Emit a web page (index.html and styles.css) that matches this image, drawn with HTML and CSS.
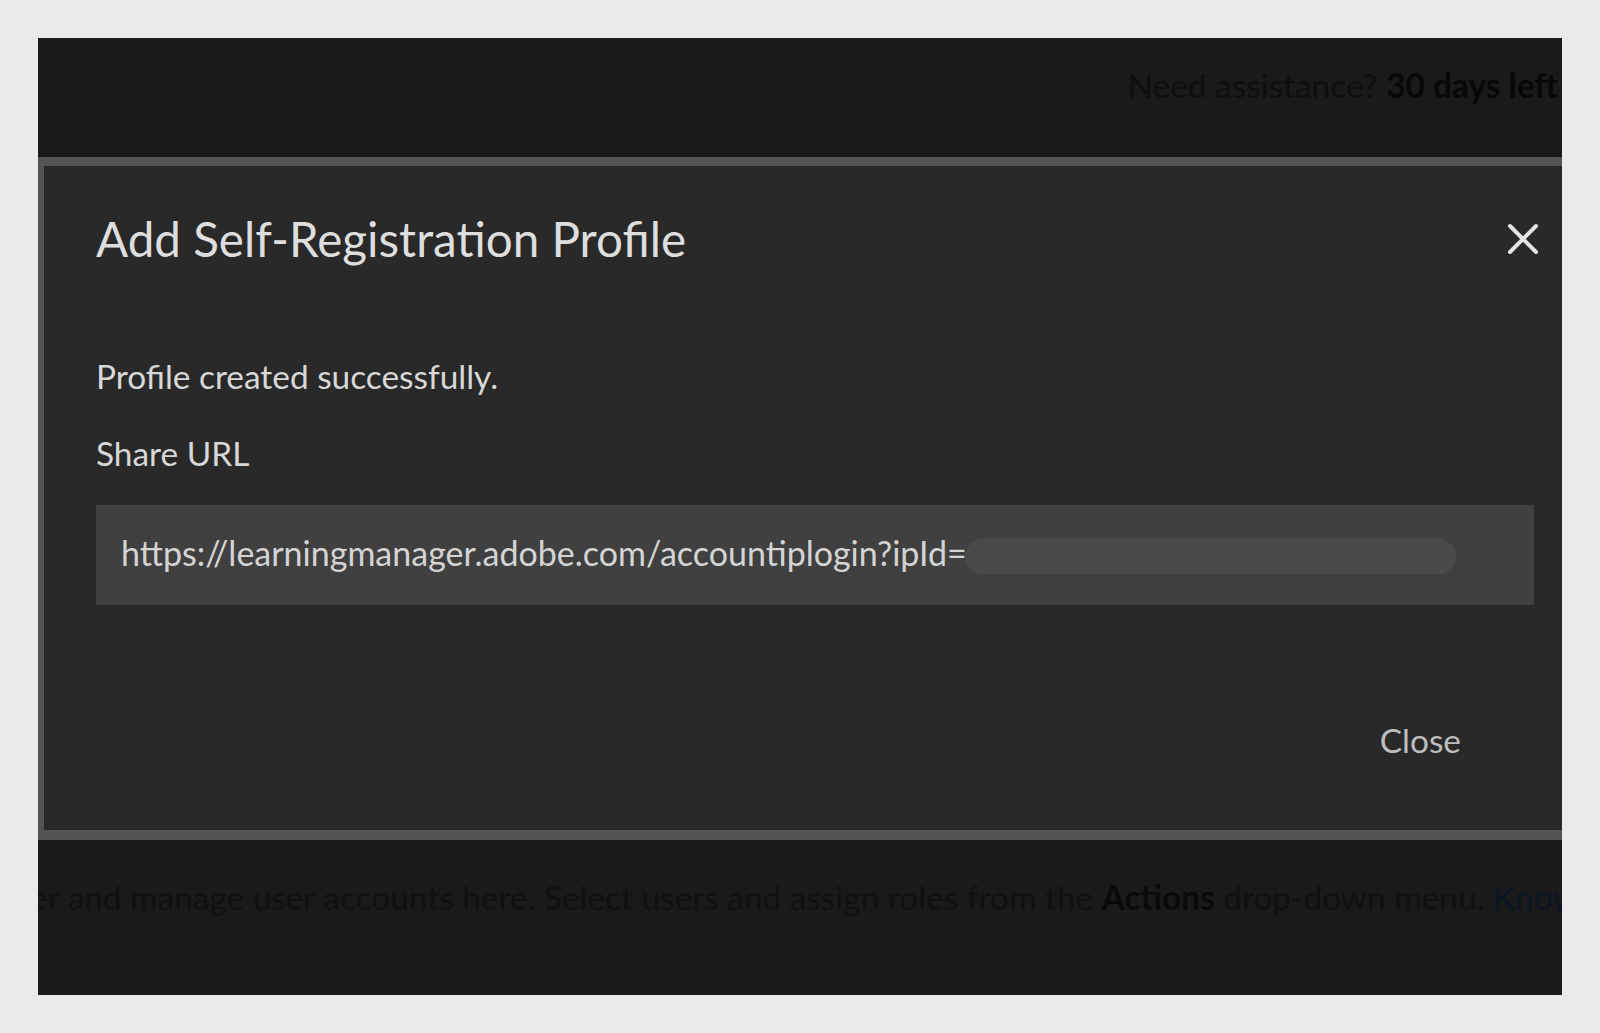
FILE: index.html
```html
<!DOCTYPE html>
<html lang="en">
<head>
<meta charset="utf-8">
<title>Add Self-Registration Profile</title>
<link rel="stylesheet" href="styles.css">
</head>
<body>
<div class="app">
  <header class="topbar">
    <div class="help"><span class="need">Need assistance?</span> <strong class="days">30 days left</strong></div>
  </header>
  <section class="modal" role="dialog" aria-labelledby="dlg-title">
    <div class="modal-head">
      <h1 id="dlg-title" class="modal-title">Add Self-Registration Profile</h1>
      <button class="icon-close" aria-label="Close dialog">
        <svg viewBox="0 0 32 32" width="32" height="32"><path d="M3 3 L29 29 M29 3 L3 29" stroke="currentColor" stroke-width="4" stroke-linecap="round"/></svg>
      </button>
    </div>
    <div class="modal-body">
      <p class="msg">Profile created successfully.</p>
      <p class="label">Share URL</p>
      <div class="url-box"><span class="url">https://learningmanager.adobe.com/accountiplogin?ipId=</span><span class="redact"></span></div>
    </div>
    <div class="modal-foot"><button class="btn-close">Close</button></div>
  </section>
  <footer class="intro">
    <p class="intro-text">er and manage user accounts here. Select users and assign roles from the <strong>Actions</strong> drop-down menu. <a class="know" href="#">Know more</a></p>
  </footer>
</div>
</body>
</html>
```

FILE: styles.css
```css
* { box-sizing: border-box; }
html, body { margin: 0; padding: 0; }
body {
  background: #eaeaea;
  font-family: "Lato", "Liberation Sans", sans-serif;
  width: 1600px;
  height: 1033px;
  overflow: hidden;
}
.app {
  margin: 38px;
  width: 1524px;
  height: 957px;
  background: #1a1a1a;
  display: flex;
  flex-direction: column;
  overflow: hidden;
}
.topbar {
  height: 119px;
  flex: none;
  display: flex;
  justify-content: flex-end;
  padding: 27px 4px 0 0;
  font-size: 33.4px;
  line-height: 40px;
  white-space: nowrap;
}
.need { color: #0f0f0f; }
.days { color: #080808; font-weight: 700; }
.modal {
  flex: none;
  height: 683px;
  background: #292929;
  border-top: 9px solid #545454;
  border-bottom: 10px solid #545454;
  border-left: 6px solid #545454;
  box-shadow: inset 1px 1px 0 #262626, inset 0 -1px 0 #262626;
  display: flex;
  flex-direction: column;
  padding-left: 52px;
}
.modal-head {
  display: flex;
  align-items: center;
  justify-content: space-between;
  padding: 45px 23px 0 0;
}
.modal-title {
  margin: 0;
  font-size: 47.6px;
  line-height: 56px;
  font-weight: 400;
  color: #dedede;
}
.icon-close {
  background: none;
  border: 0;
  padding: 0;
  width: 32px;
  height: 32px;
  color: #e4e4e4;
  display: flex;
}
.modal-body {
  padding-right: 28px;
}
.msg, .label {
  margin: 0;
  font-size: 33.4px;
  line-height: 40px;
  color: #d8d8d8;
}
.msg { margin-top: 89px; }
.label { margin-top: 37px; }
.url-box {
  margin-top: 32px;
  height: 100px;
  background: #404040;
  display: flex;
  align-items: center;
  padding: 0 25px 4px;
  font-size: 34px;
  line-height: 40px;
  color: #d4d4d4;
  white-space: nowrap;
}
.redact {
  display: inline-block;
  width: 491px;
  height: 35px;
  border-radius: 18px;
  background: #4a4a4a;
  margin: 7px 0 0 -2px;
}
.modal-foot {
  margin-top: auto;
  display: flex;
  justify-content: flex-end;
  padding: 0 101px 70px 0;
}
.btn-close {
  background: none;
  border: 0;
  padding: 0;
  font-family: inherit;
  font-size: 33.4px;
  line-height: 40px;
  color: #bdbdbd;
}
.intro {
  flex: none;
  height: 155px;
  padding-top: 37px;
  white-space: nowrap;
}
.intro-text {
  margin: 0 0 0 -8px;
  font-size: 33.4px;
  line-height: 40px;
  color: #111111;
}
.intro-text strong { color: #0a0a0a; }
.know { color: #0b1524; text-decoration: none; }
```
